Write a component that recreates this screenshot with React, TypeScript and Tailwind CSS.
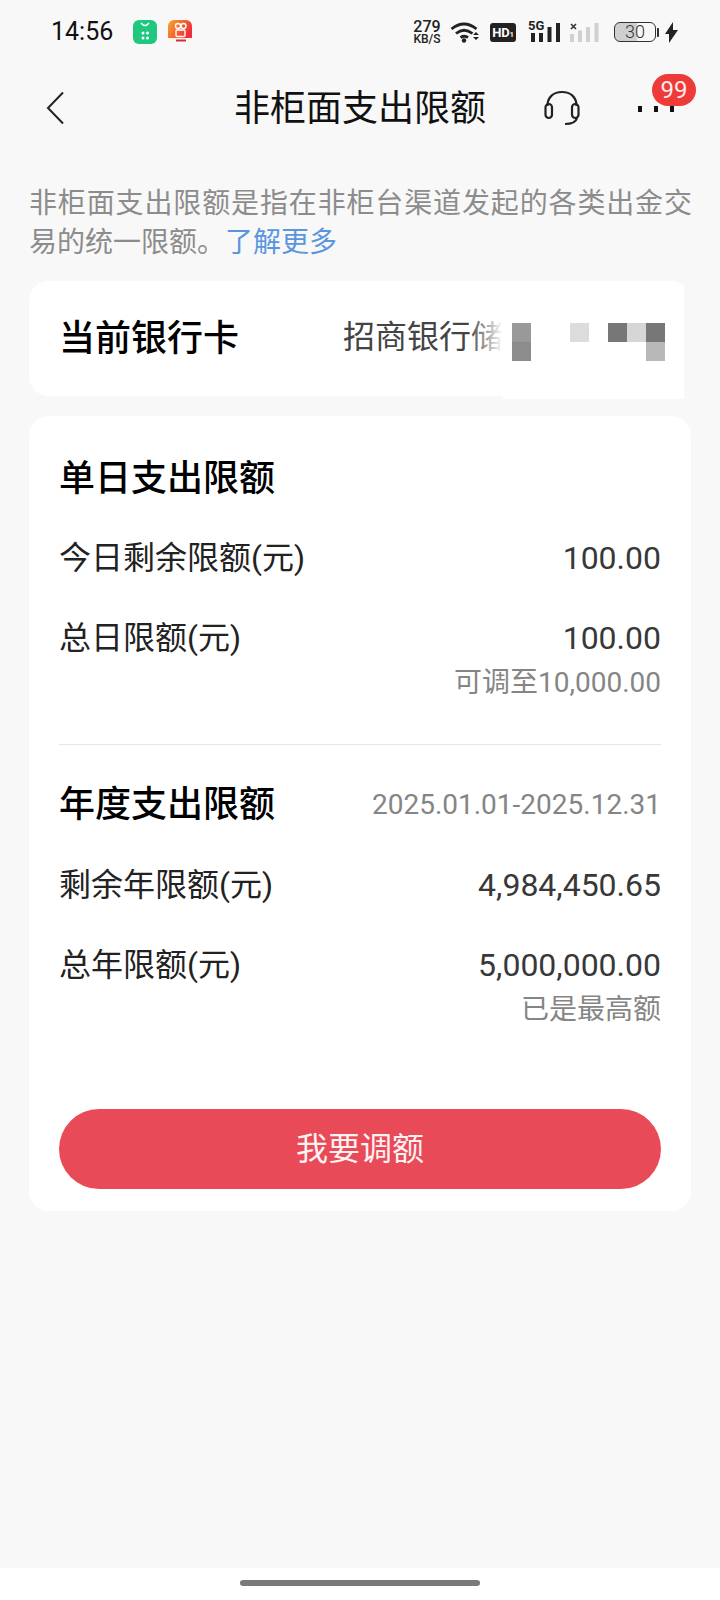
const cjk = "font-['Roboto','Noto_Sans_CJK_SC',sans-serif]";

function StatusBar() {
  return (
    <div className="flex h-[64px] items-center pl-[51px] pr-[42px]">
      <span className="text-[25px] leading-[32px] text-[#111]">14:56</span>
      <svg className="ml-[20px]" width="24" height="24" viewBox="0 0 24 24">
        <rect width="24" height="24" rx="6" fill="#20c77f" />
        <path d="M8 3q4 5 8 0" stroke="#fff" strokeWidth="1.4" fill="none" />
        <g fill="#fff"><circle cx="10" cy="13" r="1.5" /><circle cx="14.500" cy="13" r="1.5" /><circle cx="10" cy="18" r="1.5" /><circle cx="14.500" cy="18" r="1.5" /></g>
      </svg>
      <svg className="ml-[11px]" width="24" height="24" viewBox="0 0 24 24">
        <defs><linearGradient id="k" x1="0" y1="0" x2="1" y2="0.5"><stop offset="0" stopColor="#f9a825" /><stop offset="1" stopColor="#ee2f3c" /></linearGradient></defs>
        <path d="M6 0h12a6 6 0 0 1 6 6v12H0V6a6 6 0 0 1 6-6z" fill="url(#k)" />
        <path d="M0 18h24v1l-2 4h-1a30 30 0 0 0-18 0H0z" fill="#fff3ea" />
        <circle cx="10" cy="6" r="2.500" fill="none" stroke="#fff" strokeWidth="1.4" />
        <circle cx="15.500" cy="6" r="2.500" fill="none" stroke="#fff" strokeWidth="1.4" />
        <rect x="8" y="10" width="9" height="6.500" rx="1" fill="none" stroke="#fff" strokeWidth="1.4" />
        <rect x="8" y="19.500" width="10" height="2" fill="#d62b36" />
      </svg>
      <div className="ml-auto flex items-center">
        <div className="flex w-[28px] flex-col items-center text-[#222]">
          <span className="text-[16px] font-medium leading-[13px]">279</span>
          <span className="text-[12px] font-medium leading-[12px]">KB/S</span>
        </div>
        <svg className="ml-[9px]" width="30" height="22" viewBox="0 0 30 22">
          <path d="M1.500 8q12.500-10 25 0M6 12.500q8-6.500 16.500 0M10.500 16.500q4-2.500 7.500 0" fill="none" stroke="#222" strokeWidth="2.800" />
          <circle cx="14" cy="19.500" r="2.200" fill="#222" />
          <path d="M23 14l3-3 3 3zM23 16l3 3 3-3z" fill="#222" />
        </svg>
        <div className="ml-[10px] flex h-[19px] w-[26px] items-baseline justify-center rounded-[3px] bg-[#222] text-[13px] font-bold leading-[19px] text-white">HD<span className="text-[7px]">1</span></div>
        <div className="relative ml-[12px] h-[22px] w-[32px]">
          <span className="absolute left-0 top-[-2px] text-[13px] font-bold leading-[14px] text-[#222]">5G</span>
          <svg className="absolute left-0 top-0" width="32" height="22" viewBox="0 0 32 22">
            <g fill="#222"><rect x="3" y="12" width="4" height="9" /><rect x="11" y="12" width="4" height="9" /><rect x="19.500" y="6" width="4" height="15" /><rect x="28" y="2" width="4" height="19" /></g>
          </svg>
        </div>
        <svg className="ml-[10px]" width="29" height="22" viewBox="0 0 29 22">
          <path d="M1 3l5 5M6 3l-5 5" stroke="#333" strokeWidth="1.6" />
          <g fill="#d0d0d0"><rect x="0" y="13" width="4" height="8" /><rect x="8" y="9.500" width="4" height="11.500" /><rect x="16" y="6" width="4" height="15" /><rect x="24.500" y="2" width="4" height="19" /></g>
        </svg>
        <div className="ml-[15px] flex h-[20px] w-[42px] items-center justify-center overflow-hidden rounded-[6px] border-[1.5px] border-[#333] bg-[linear-gradient(90deg,#cfcfcf_55%,transparent_55%)] text-[18px] font-light leading-none text-[#333]">30</div>
        <div className="ml-[1px] h-[9px] w-[2px] rounded-r-[1px] bg-[#333]" />
        <svg className="ml-[6px]" width="13" height="21" viewBox="0 0 13 21"><path d="M8 0v8h5L4 21v-9H0z" fill="#222" /></svg>
      </div>
    </div>
  );
}

function NavBar() {
  return (
    <div className="relative flex h-[86px] items-center justify-center pt-[4px]">
      <svg className="absolute left-[46px] top-[27px]" width="20" height="34" viewBox="0 0 20 34">
        <path d="M17 1.500 2 17l15 15.500" fill="none" stroke="#222" strokeWidth="2" />
      </svg>
      <h1 className="text-[36px] font-normal leading-[44px] text-[#111]">非柜面支出限额</h1>
      <svg className="absolute left-[544px] top-[26px]" width="36" height="36" viewBox="0 0 36 36" fill="none" stroke="#222" strokeWidth="2.200">
        <path d="M3.500 16C3.500 7 9.500 2 18 2s14.500 5 14.500 14" />
        <rect x="1.500" y="14" width="6.500" height="14" rx="3.200" />
        <rect x="28" y="14" width="6.500" height="14" rx="3.200" />
        <path d="M33 28c-1 4-6 6-12 6" />
      </svg>
      <div className="absolute left-[638px] top-[42px] flex gap-[12px]">
        <span className="h-[6px] w-[4px] bg-[#111]" /><span className="h-[6px] w-[4px] bg-[#111]" /><span className="h-[6px] w-[4px] bg-[#111]" />
      </div>
      <div className="absolute left-[652px] top-[10px] flex h-[32px] w-[44px] items-center justify-center rounded-full bg-[#ee3a39] text-[24px] leading-none text-[#ffe9e9]">99</div>
    </div>
  );
}

function Row({ label, value, sub, mt }: { label: string; value: string; sub?: string; mt: string }) {
  return (
    <div className={`flex justify-between ${mt}`}>
      <span className="text-[32px] leading-[42px] text-[#222]">{label}</span>
      <div className="flex flex-col items-end">
        <span className="text-[32px] leading-[42px] text-[#383838]">{value}</span>
        {sub && <span className="mt-[3px] text-[28px] leading-[42px] text-[#858585]">{sub}</span>}
      </div>
    </div>
  );
}

export default function App() {
  return (
    <div className={`flex h-[1600px] w-[720px] flex-col overflow-hidden bg-[#f8f8f8] ${cjk}`}>
      <StatusBar />
      <NavBar />
      <p className="ml-[29px] mr-[28px] mt-[34px] text-justify text-[28px] leading-[39px] text-[#8c8c8c]">
        非柜面支出限额是指在非柜台渠道发起的各类出金交易的统一限额。<span className="text-[#5a96e0]">了解更多</span>
      </p>
      <div className="relative mx-[29px] mt-[19px] flex h-[115px] items-center rounded-[20px] bg-white pl-[30px]">
        <span className="text-[36px] font-medium leading-[46px] text-black">当前银行卡</span>
        <span className="absolute left-[314px] top-[35px] w-[160px] whitespace-nowrap text-[32px] leading-[42px] text-[#444]">招商银行储</span>
        <div className="absolute left-[440px] top-[30px] h-[56px] w-[40px] bg-[linear-gradient(90deg,transparent,white_85%)]" />
        <div className="absolute left-[655px] top-0 h-full w-[7px] bg-[#f8f8f8]" />
        <div className="absolute left-[474px] top-[5px] h-[113px] w-[181px] bg-white" />
        <span className="absolute left-[483px] top-[42px] h-[19px] w-[19px] bg-[#999]" />
        <span className="absolute left-[483px] top-[61px] h-[19px] w-[19px] bg-[#8c8c8c]" />
        <span className="absolute left-[541px] top-[42px] h-[19px] w-[19px] bg-[#dcdcdc]" />
        <span className="absolute left-[579px] top-[42px] h-[19px] w-[19px] bg-[#777]" />
        <span className="absolute left-[598px] top-[42px] h-[19px] w-[19px] bg-[#d6d6d6]" />
        <span className="absolute left-[617px] top-[42px] h-[19px] w-[19px] bg-[#777]" />
        <span className="absolute left-[617px] top-[61px] h-[19px] w-[19px] bg-[#b8b8b8]" />
      </div>
      <div className="mx-[29px] mt-[20px] flex h-[795px] flex-col rounded-[20px] bg-white px-[30px]">
        <h2 className="mt-[40px] text-[36px] font-medium leading-[46px] text-black">单日支出限额</h2>
        <Row mt="mt-[35px]" label="今日剩余限额(元)" value="100.00" />
        <Row mt="mt-[38px]" label="总日限额(元)" value="100.00" sub="可调至10,000.00" />
        <div className="mt-[40px] h-px bg-[#e6e6e6]" />
        <div className="mt-[37px] flex items-center justify-between">
          <h2 className="text-[36px] font-medium leading-[46px] text-black">年度支出限额</h2>
          <span className="text-[28px] leading-[36px] text-[#858585]">2025.01.01-2025.12.31</span>
        </div>
        <Row mt="mt-[36px]" label="剩余年限额(元)" value="4,984,450.65" />
        <Row mt="mt-[38px]" label="总年限额(元)" value="5,000,000.00" sub="已是最高额" />
        <button className="mt-[78px] h-[80px] rounded-full bg-[#e84a58] text-[32px] text-[#fff2f2]">我要调额</button>
      </div>
      <div className="relative mt-auto h-[32px] bg-white">
        <div className="absolute left-[240px] top-[12px] h-[6px] w-[240px] rounded-full bg-[#7a7a7a]" />
      </div>
    </div>
  );
}
